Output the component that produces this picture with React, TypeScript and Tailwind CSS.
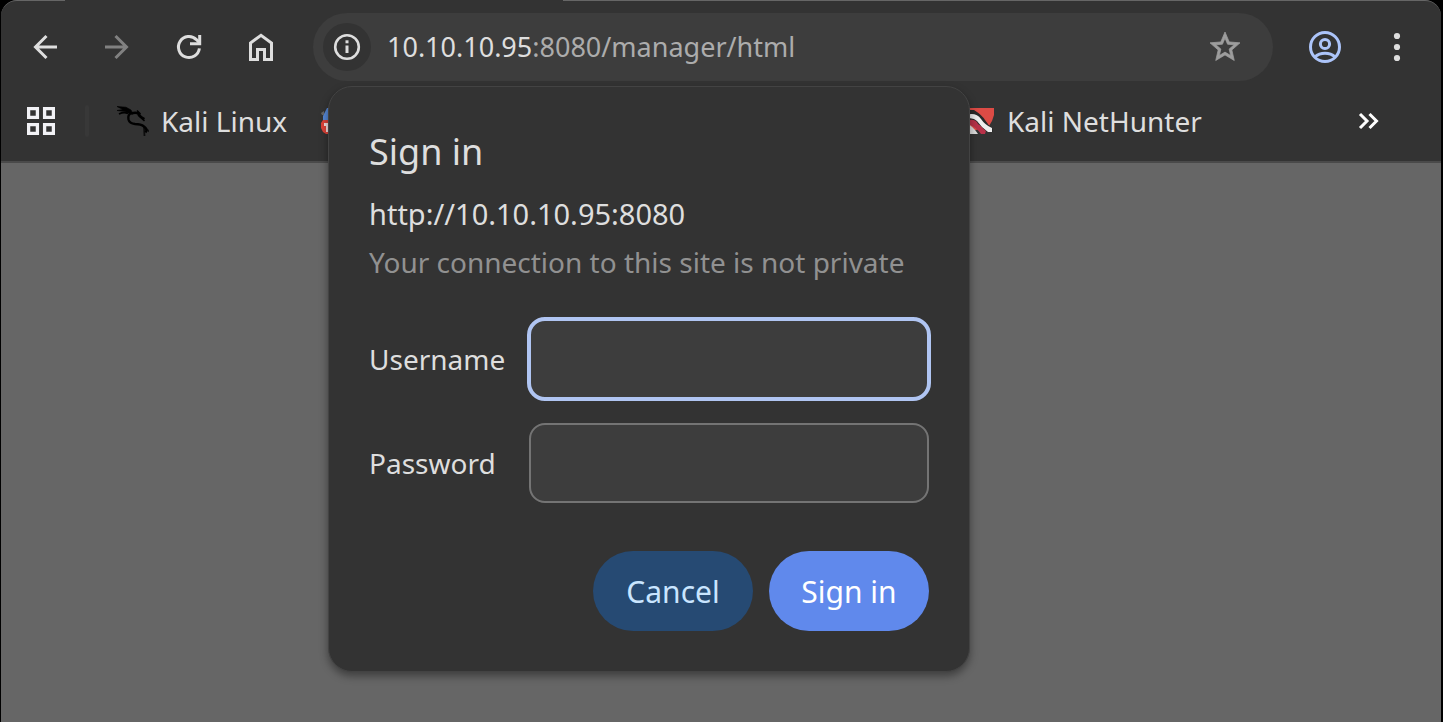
import type { ReactNode } from 'react';

function BackIcon() {
  return (
    <svg viewBox="0 0 36 36" className="size-9" fill="none" stroke="currentColor" strokeWidth="3" aria-hidden="true">
      <path d="M30 18H8.500M19.500 7L8.500 18l11 11" />
    </svg>
  );
}

function ReloadIcon() {
  return (
    <svg viewBox="0 0 36 36" className="size-9" fill="none" stroke="currentColor" strokeWidth="3" aria-hidden="true">
      <path d="M28.400 19.400A10.500 10.500 0 1 1 25.400 10.600L28.200 13.600" />
      <path d="M28.700 6v8.700H19" />
    </svg>
  );
}

function HomeIcon() {
  return (
    <svg viewBox="0 0 36 36" className="size-9" fill="none" stroke="currentColor" strokeWidth="3" aria-hidden="true">
      <path d="M7.500 30.500V14L18 6.300L28.500 14V30.500H21.500V20.500H14.500V30.500Z" />
    </svg>
  );
}

function InfoIcon() {
  return (
    <svg viewBox="0 0 36 36" className="size-9" fill="none" stroke="currentColor" aria-hidden="true">
      <circle cx="18" cy="18" r="11.800" strokeWidth="2.600" />
      <path d="M18 16.500v7.500" strokeWidth="3" />
      <path d="M18 11.300v3" strokeWidth="3" />
    </svg>
  );
}

function StarIcon() {
  return (
    <svg viewBox="0 0 24 24" className="size-9" fill="currentColor" stroke="currentColor" strokeWidth="0.500" aria-hidden="true">
      <path d="m22 9.240-7.190-.620L12 2 9.190 8.630 2 9.240l5.460 4.730L5.820 21 12 17.270 18.180 21l-1.630-7.030zM12 15.400l-3.760 2.270 1-4.280-3.320-2.880 4.380-.380L12 6.100l1.710 4.040 4.380.380-3.320 2.880 1 4.280z" />
    </svg>
  );
}

function ProfileIcon() {
  return (
    <svg viewBox="0 0 36 36" className="size-9" fill="none" stroke="currentColor" strokeWidth="3" aria-hidden="true">
      <circle cx="18" cy="18" r="14.500" />
      <circle cx="18" cy="15" r="4.600" />
      <path d="M7.800 28Q12 24.200 18 24.200T28.200 28" />
    </svg>
  );
}

function MenuIcon() {
  return (
    <svg viewBox="0 0 36 36" className="size-9" fill="currentColor" aria-hidden="true">
      <circle cx="18" cy="7" r="3.100" />
      <circle cx="18" cy="18" r="3.100" />
      <circle cx="18" cy="29" r="3.100" />
    </svg>
  );
}

function AppsIcon() {
  return (
    <svg viewBox="0 0 28 28" className="size-7" fill="none" stroke="currentColor" strokeWidth="3.300" aria-hidden="true">
      <path d="M1.600 1.600h8.800v8.800H1.600zM17.600 1.600h8.800v8.800h-8.800zM1.600 17.600h8.800v8.800H1.600zM17.600 17.600h8.800v8.800h-8.800z" />
    </svg>
  );
}

function DragonIcon() {
  return (
    <svg viewBox="0 0 32 32" className="size-8 shrink-0" fill="none" stroke="#000" aria-hidden="true">
      <path d="M0 1.500L9 2.200L14 5L16 9L11 8L8 6.500L0 5.500L6 4.500Z" fill="#000" strokeWidth="0.600" />
      <path d="M2 9Q7 6.500 11 8.500" strokeWidth="1.800" />
      <path d="M14 8Q10.500 10 11.500 14.500Q12.500 18.500 18 19Q24 19 27 21.500Q31 24.500 28.500 27.500" strokeWidth="2.400" />
      <path d="M14 8.500Q20 6.500 22 9.500Q23 12 27.500 14" strokeWidth="2.400" />
      <path d="M21 10L27.500 16M20 5.500L23.500 9" strokeWidth="1.600" />
      <path d="M27 22L27.500 31M29 23.500L32 26.500" strokeWidth="1.800" opacity="0.750" />
    </svg>
  );
}

function ToolsIcon() {
  return (
    <svg viewBox="0 0 32 32" className="size-8 shrink-0" aria-hidden="true">
      <path d="M7 3h18v13H3v-5l2-4z" fill="#5587d5" />
      <path d="M1 8l3-2v4H2z" fill="#666" />
      <path d="M3 15h26v10l-2 4H6l-3-2-2-4v-5z" fill="#dc4238" />
      <path d="M4 18h6v3H8v6H6v-6H4z" fill="#f2dede" />
    </svg>
  );
}

function NetHunterIcon() {
  return (
    <svg viewBox="0 0 32 32" className="size-8 shrink-0" aria-hidden="true">
      <path d="M3 3h28v7l-2 6-3 5L3 28z" fill="#dc4b45" />
      <path d="M3 5L11 5Q19 10 22 15T30 24V27H24L16 20L3 16Z" fill="#292929" />
      <path d="M3 10Q13 7 18 14Q22 20 29 23V27H25Q18 22 14 16Q10 12 3 14Z" fill="#eee" />
      <path d="M6 15Q13 14 15 19L23 26L22 29H18Q13 22 7 20Z" fill="#b83249" />
      <path d="M3 18Q10 21 15 29H3Z" fill="#ddd" />
    </svg>
  );
}

function IconButton({ label, className = '', children }: { label: string; className?: string; children: ReactNode }) {
  return (
    <button type="button" aria-label={label} className={`flex size-9 shrink-0 items-center justify-center ${className}`}>
      {children}
    </button>
  );
}

function Toolbar() {
  return (
    <div className="flex items-center gap-9 px-[26px] pt-3">
      <IconButton label="Back"><BackIcon /></IconButton>
      <IconButton label="Forward" className="text-[#818181]">
        <span className="rotate-180"><BackIcon /></span>
      </IconButton>
      <IconButton label="Reload"><ReloadIcon /></IconButton>
      <IconButton label="Home"><HomeIcon /></IconButton>
      <div className="-mx-[2px] flex h-[68px] min-w-0 flex-1 items-center rounded-full bg-[#3d3d3d] pr-[30px] pl-[10px]">
        <button type="button" aria-label="View site information" className="flex size-12 shrink-0 items-center justify-center rounded-full bg-[#333]">
          <InfoIcon />
        </button>
        <p className="min-w-0 flex-1 truncate pl-4 text-[27px] text-[#acacac]">
          <span className="text-[#dedede]">10.10.10.95</span>:8080/manager/html
        </p>
        <IconButton label="Bookmark this tab" className="text-[#9d9d9d]"><StarIcon /></IconButton>
      </div>
      <IconButton label="Profile" className="text-[#acc4f9]"><ProfileIcon /></IconButton>
      <IconButton label="Menu"><MenuIcon /></IconButton>
    </div>
  );
}

function BookmarksBar() {
  return (
    <nav aria-label="Bookmarks" className="flex h-20 items-center pr-[54px] pl-[26px] text-[28px]">
      <button type="button" aria-label="Apps" className="text-[#f2f2f6]"><AppsIcon /></button>
      <span className="mr-7 ml-[30px] h-8 w-1 shrink-0 rounded-full bg-[#383838]" />
      <a href="#kali" className="flex w-[203px] shrink-0 items-center gap-3 whitespace-nowrap"><DragonIcon />Kali Linux</a>
      <a href="#tools" aria-label="Kali Tools" className="w-[643px] shrink-0"><ToolsIcon /></a>
      <a href="#nethunter" className="flex shrink-0 items-center gap-3 whitespace-nowrap"><NetHunterIcon />Kali NetHunter</a>
      <button type="button" aria-label="More bookmarks" className="ml-auto text-white">
        <svg viewBox="0 0 36 36" className="size-9" fill="none" stroke="currentColor" strokeWidth="3" aria-hidden="true">
          <path d="M9 11l7 7-7 7M18.500 11l7 7-7 7" />
        </svg>
      </button>
    </nav>
  );
}

function SignInDialog() {
  return (
    <form
      role="dialog"
      aria-labelledby="sign-in-title"
      onSubmit={(event) => event.preventDefault()}
      className="absolute top-[86px] left-[328px] w-[642px] rounded-3xl border border-[#434343] bg-[#333] px-10 py-10 shadow-[0_4px_8px_rgba(0,0,0,0.4)]"
    >
      <h1 id="sign-in-title" className="text-[36px] leading-[50px]">Sign in</h1>
      <p className="mt-[13px] text-[29px] leading-12">http://10.10.10.95:8080</p>
      <p className="text-[28px] leading-12 whitespace-nowrap text-[#919191]">Your connection to this site is not private</p>
      <div className="mt-[33px] grid grid-cols-[160px_1fr] items-center gap-y-6 text-[28px]">
        <label htmlFor="username">Username</label>
        <input id="username" type="text" className="h-20 w-full min-w-0 rounded-2xl bg-[#3d3d3d] px-4 outline-4 -outline-offset-2 outline-[#b0c5f2]" />
        <label htmlFor="password">Password</label>
        <input id="password" type="password" className="h-20 w-full min-w-0 rounded-2xl border-2 border-[#747474] bg-[#3d3d3d] px-4 outline-none" />
      </div>
      <div className="mt-12 flex justify-end gap-4 text-[30px]">
        <button type="button" className="h-20 w-40 rounded-full bg-[#264a73] text-[#c9e5ff]">Cancel</button>
        <button type="submit" className="h-20 w-40 rounded-full bg-[#6089ec] text-white">Sign in</button>
      </div>
    </form>
  );
}

export default function App() {
  return (
    <div className="min-h-screen bg-black pr-[2px] pl-px font-['Noto_Sans',sans-serif] text-[#dedede]">
      <div className="flex min-h-screen flex-col bg-[#666]">
        <header className="bg-black">
          <div className="relative rounded-t-[16px] border-t border-b-2 border-[#666] border-b-[#4a4a4a] bg-[#333]">
            <span className="absolute -top-px left-16 h-px w-[498px] bg-[#333]" />
            <Toolbar />
            <BookmarksBar />
          </div>
        </header>
        <main className="flex-1">
          <SignInDialog />
        </main>
      </div>
    </div>
  );
}
